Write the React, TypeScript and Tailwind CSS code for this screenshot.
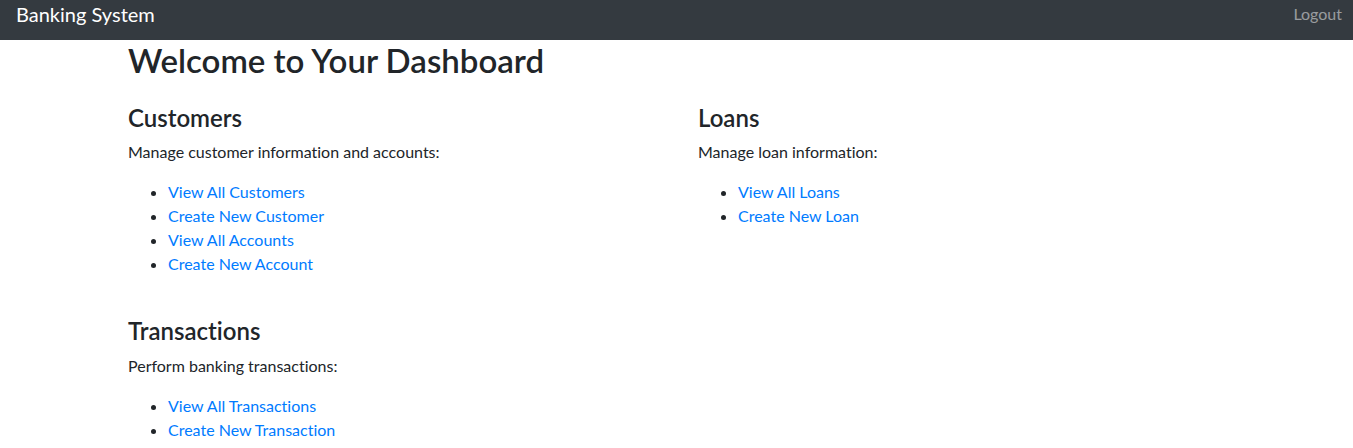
const font = {
  fontFamily: '"Lato", "Open Sans", sans-serif',
  fontVariantLigatures: 'none' as const,
}

function Section({
  title,
  text,
  links,
}: {
  title: string
  text: string
  links: string[]
}) {
  return (
    <div>
      <h2 className="mb-2 text-[24px] leading-[1.2] font-semibold text-[#212529]">
        {title}
      </h2>
      <p className="mb-4 text-[16px] leading-6 text-[#212529]">{text}</p>
      <ul className="mb-4 list-disc pl-10 text-[16px] leading-6 text-[#212529]">
        {links.map((l) => (
          <li key={l}>
            <a href="#" className="text-[#007bff]">
              {l}
            </a>
          </li>
        ))}
      </ul>
    </div>
  )
}

export default function App() {
  return (
    <div className="min-h-screen bg-white" style={font}>
      <nav className="flex h-10 items-start justify-between bg-[#343a40] pt-0 pr-[11px] pl-4">
        <span className="text-[20px] leading-[28px] text-white">Banking System</span>
        <a href="#" className="text-[16px] leading-[28px] text-[rgba(255,255,255,0.5)]">
          Logout
        </a>
      </nav>
      <div className="pl-[128px]">
        <h1 className="mt-[1px] mb-2 text-[33px] leading-[1.2] font-semibold text-[#212529]">
          Welcome to Your Dashboard
        </h1>
        <div className="grid w-[1140px] grid-cols-2 gap-y-[25px]">
          <div className="mt-[15px]">
            <Section
              title="Customers"
              text="Manage customer information and accounts:"
              links={[
                'View All Customers',
                'Create New Customer',
                'View All Accounts',
                'Create New Account',
              ]}
            />
          </div>
          <div className="mt-[15px]">
            <Section
              title="Loans"
              text="Manage loan information:"
              links={['View All Loans', 'Create New Loan']}
            />
          </div>
          <div>
            <Section
              title="Transactions"
              text="Perform banking transactions:"
              links={['View All Transactions', 'Create New Transaction']}
            />
          </div>
        </div>
      </div>
    </div>
  )
}
